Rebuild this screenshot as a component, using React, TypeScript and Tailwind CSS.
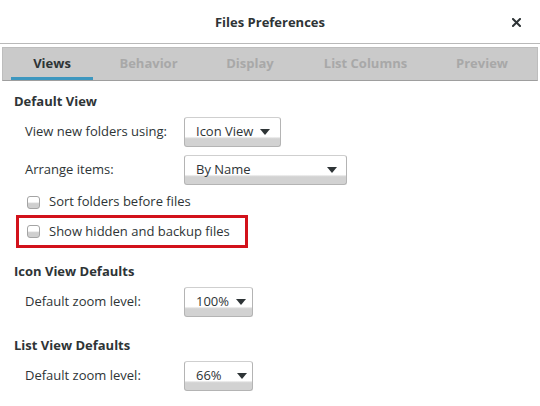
import React from 'react';

const font = { fontFamily: '"Open Sans", "Noto Sans", sans-serif' };

const tabs = [
  { label: 'Views', w: 'w-[82px]', active: true },
  { label: 'Behavior', w: 'w-[99px]', active: false },
  { label: 'Display', w: 'w-[92px]', active: false },
  { label: 'List Columns', w: 'w-[127px]', active: false },
  { label: 'Preview', w: 'w-[94px]', active: false },
];

const Arrow = () => (
  <svg width="10" height="6" viewBox="0 0 10 6" className="shrink-0">
    <path d="M0 0 L10 0 L5 6 Z" fill="#2e3436" />
  </svg>
);

const Combo = ({ label, width, arrowGap }: { label: string; width: string; arrowGap: string }) => (
  <div
    className={`${width} h-[30px] shrink-0 flex items-center whitespace-nowrap pl-[11px] pr-[9px] rounded-[3px] border border-[#b4b4b4] border-t-[#cfcfcf] bg-linear-to-b from-white from-[66%] to-[#d2d2d2] to-[74%] text-[13px] text-[#2e3436]`}
  >
    <span className={arrowGap}>{label}</span>
    <Arrow />
  </div>
);

const Checkbox = () => (
  <div className="w-[13px] h-[13px] rounded-[3px] border border-[#a4a4a4] bg-linear-to-b from-white from-[45%] to-[#cfcfcf] to-[60%] shrink-0" />
);

const App: React.FC = () => {
  return (
    <div className="w-[540px] h-[406px] bg-white overflow-hidden text-[#2e3436]" style={font}>
      {/* header */}
      <div className="h-[44px] pt-[3px] flex items-center justify-center relative border-b border-[#b9b9b9]">
        <span className="text-[13px] font-bold">Files Preferences</span>
        <svg width="9" height="9" viewBox="0 0 9 9" className="absolute right-[19px] top-[18px]">
          <path d="M1 1 L8 8 M8 1 L1 8" stroke="#2e3436" strokeWidth="2" strokeLinecap="square" />
        </svg>
      </div>

      {/* tab bar */}
      <div className="px-[2px] pt-[3px]">
        <div className="h-[34px] flex items-stretch pl-[8px] gap-[6px] bg-[#cacaca] border border-[#bdbdbd] border-b-[#9e9e9e]">
          {tabs.map((t) => (
            <div
              key={t.label}
              className={`${t.w} pt-[3px] flex items-center justify-center text-[13px] font-bold border-b-[3px] ${
                t.active ? 'text-[#2e3436] border-[#3d97bf]' : 'text-[#a8a8a8] border-transparent'
              }`}
            >
              {t.label}
            </div>
          ))}
        </div>
      </div>

      {/* content */}
      <div className="pl-[14px] text-[13px]">
        <div className="mt-[12px] h-[17px] leading-[17px] font-bold">Default View</div>

        <div className="mt-[7px] flex items-center pl-[11px]">
          <span className="w-[159px]">View new folders using:</span>
          <Combo label="Icon View" width="w-[97px]" arrowGap="mr-[7px]" />
        </div>
        <div className="mt-[8px] flex items-center pl-[11px]">
          <span className="w-[159px]">Arrange items:</span>
          <Combo label="By Name" width="w-[163px]" arrowGap="flex-1" />
        </div>

        <div className="mt-[7px] h-[20px] flex items-center gap-[9px] pl-[13px]">
          <Checkbox />
          <span>Sort folders before files</span>
        </div>

        <div className="mt-[3px] ml-[2px] w-[232px] h-[33px] border-[3px] border-[#d2121b] flex items-center gap-[9px] pl-[8px]">
          <Checkbox />
          <span>Show hidden and backup files</span>
        </div>

        <div className="mt-[15px] h-[17px] leading-[17px] font-bold">Icon View Defaults</div>
        <div className="mt-[7px] flex items-center pl-[11px]">
          <span className="w-[159px]">Default zoom level:</span>
          <Combo label="100%" width="w-[69px]" arrowGap="mr-[7px]" />
        </div>

        <div className="mt-[20px] h-[17px] leading-[17px] font-bold">List View Defaults</div>
        <div className="mt-[7px] flex items-center pl-[11px]">
          <span className="w-[159px]">Default zoom level:</span>
          <Combo label="66%" width="w-[69px]" arrowGap="mr-[15px]" />
        </div>
      </div>
    </div>
  );
};

export default App;
